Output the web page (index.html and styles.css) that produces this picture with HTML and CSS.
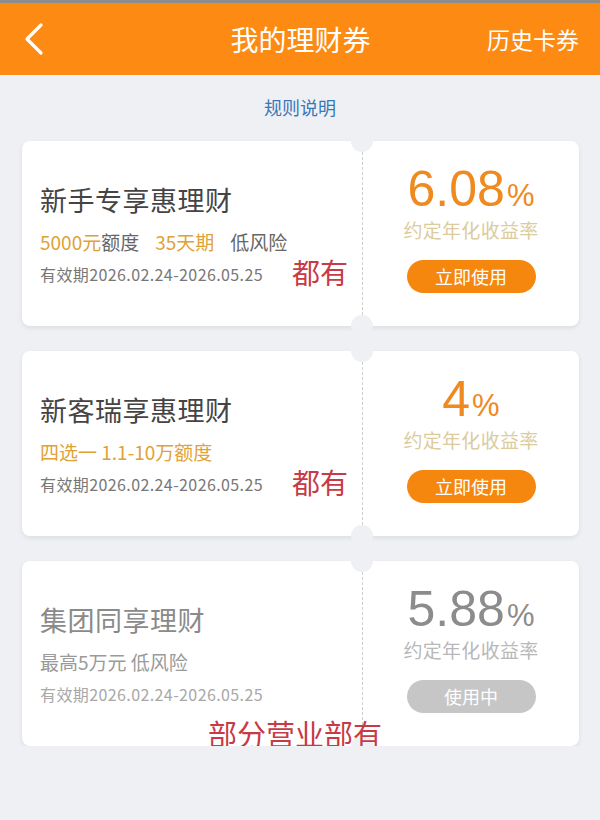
FILE: index.html
```html
<!DOCTYPE html>
<html lang="zh-CN">
    <head>
        <meta charset="UTF-8">
        <meta name="viewport" content="width=device-width, initial-scale=1.0">
        <title>我的理财券</title>
        <link rel="stylesheet" href="styles.css">
    </head>

    <body>
        <header class="topbar">
            <span class="back">
                <svg width="22" height="34" viewBox="0 0 22 34"><path d="M19 3 L5 17 L19 31" fill="none" stroke="#fff" stroke-width="3.2" stroke-linecap="round" stroke-linejoin="round"/></svg>
            </span>
            <h1 class="title">我的理财券</h1>
            <a class="history" href="#">历史卡券</a>
        </header>

        <div class="rules">规则说明</div>

        <div class="list">
            <div class="card">
                <div class="info">
                    <div class="name">新手专享惠理财</div>
                    <div class="tags"><span class="gold">5000元</span>额度<span class="gold gap">35天期</span><span class="gap">低风险</span></div>
                    <div class="date">有效期2026.02.24-2026.05.25</div>
                </div>
                <div class="rate">
                    <div class="num">6.08<small>%</small></div>
                    <div class="label">约定年化收益率</div>
                    <a class="btn" href="#">立即使用</a>
                </div>
                <span class="note note-both">都有</span>
            </div>

            <div class="card">
                <div class="info">
                    <div class="name">新客瑞享惠理财</div>
                    <div class="tags gold">四选一 1.1-10万额度</div>
                    <div class="date">有效期2026.02.24-2026.05.25</div>
                </div>
                <div class="rate">
                    <div class="num">4<small>%</small></div>
                    <div class="label">约定年化收益率</div>
                    <a class="btn" href="#">立即使用</a>
                </div>
                <span class="note note-both">都有</span>
            </div>

            <div class="card used">
                <div class="info">
                    <div class="name">集团同享理财</div>
                    <div class="tags">最高5万元 低风险</div>
                    <div class="date">有效期2026.02.24-2026.05.25</div>
                </div>
                <div class="rate">
                    <div class="num">5.88<small>%</small></div>
                    <div class="label">约定年化收益率</div>
                    <a class="btn" href="#">使用中</a>
                </div>
                <span class="note note-part">部分营业部有</span>
            </div>
        </div>
    </body>
</html>
```

FILE: styles.css
```css
body {
    margin: 0;
    background-color: #eff0f4;
    font-family: "Noto Sans CJK SC", "Noto Sans", sans-serif;
    color: #444;
}

.topbar {
    display: grid;
    grid-template-columns: 1fr auto 1fr;
    align-items: center;
    height: 72px;
    padding: 0 21px 0 22px;
    border-top: 3px solid #8d8d8d;
    background-color: #fd8a12;
}

.back {
    display: flex;
}

.title {
    margin: 0;
    font-size: 28px;
    font-weight: normal;
    color: #fff;
}

.history {
    justify-self: end;
    font-size: 23px;
    color: #fff;
    text-decoration: none;
}

.rules {
    text-align: center;
    font-size: 18px;
    color: #3878b8;
    padding-top: 20px;
    line-height: 24px;
}

.list {
    display: flex;
    flex-direction: column;
    gap: 25px;
    padding: 22px 21px 0 22px;
}

.card {
    position: relative;
    display: flex;
    height: 185px;
    background-color: #fff;
    border-radius: 8px;
    box-shadow: 0 2px 5px rgba(0, 0, 0, 0.08);
}

/* ticket notches */
.card::before,
.card::after {
    content: "";
    position: absolute;
    left: 329px;
    width: 22px;
    height: 22px;
    border-radius: 50%;
    background-color: #eff0f4;
}

.card::before {
    top: -11px;
}

.card::after {
    bottom: -11px;
}

.info {
    width: 340px;
    padding: 43px 0 0 18px;
    box-sizing: border-box;
}

.name {
    font-size: 27px;
    line-height: 32px;
    letter-spacing: 0.5px;
    color: #444;
}

.tags {
    margin-top: 14px;
    font-size: 19px;
    line-height: 24px;
    color: #666;
}

.gold {
    color: #dfa236;
}

.gap {
    margin-left: 16px;
}

.date {
    margin-top: 9px;
    font-size: 16px;
    line-height: 22px;
    letter-spacing: 0.4px;
    color: #777;
}

.rate {
    flex: 1;
    display: flex;
    flex-direction: column;
    align-items: center;
    padding-top: 11px;
    border-left: 1px dashed #cfcfcf;
    margin: 11px 0;
}

.num {
    font-family: "Liberation Sans", Arial, sans-serif;
    font-size: 50px;
    height: 52px;
    line-height: 52px;
    color: #ee8a20;
}

.num small {
    font-size: 31px;
    line-height: 0;
    margin-left: 2px;
}

.label {
    margin-top: 2px;
    font-size: 19px;
    line-height: 26px;
    letter-spacing: 0.3px;
    color: #dccb9c;
}

.btn {
    margin-top: 17px;
    width: 129px;
    height: 33px;
    line-height: 33px;
    border-radius: 17px;
    text-align: center;
    font-size: 18px;
    color: #fff;
    background-color: #f5870f;
    text-decoration: none;
}

.used .name {
    color: #8a8a8a;
}

.used .tags {
    color: #9a9a9a;
}

.used .date {
    color: #a8a8a8;
}

.used .num {
    color: #8c8c8c;
}

.used .label {
    color: #b8b8b8;
}

.used .btn {
    background-color: #c6c6c6;
}

/* red annotations written over the screenshot */
.note {
    position: absolute;
    z-index: 1;
    font-size: 28px;
    line-height: 32px;
    color: #c83a45;
}

.note-both {
    left: 270px;
    top: 115px;
}

.note-part {
    left: 186px;
    top: 156px;
    font-size: 29px;
}
```
